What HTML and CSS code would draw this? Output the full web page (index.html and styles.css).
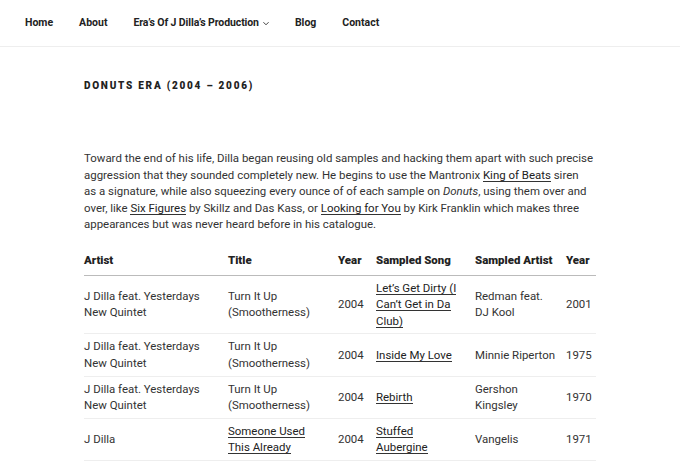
FILE: index.html
```html
<!DOCTYPE html>
<html lang="en">
<head>
  <meta charset="UTF-8" />
  <meta name="viewport" content="width=device-width, initial-scale=1.0"/>
  <title>Donuts Era (2004 – 2006)</title>
  <link rel="stylesheet" href="styles.css">
</head>
<body>
  <nav class="nav">
    <a href="#">Home</a>
    <a href="#">About</a>
    <a href="#" class="has-sub">Era’s Of J Dilla’s Production
      <svg class="chev" width="7" height="5" viewBox="0 0 7 5"><path d="M0.5 1 L3.5 4 L6.5 1" fill="none" stroke="#222" stroke-width="1"/></svg>
    </a>
    <a href="#">Blog</a>
    <a href="#">Contact</a>
  </nav>

  <main class="content">
    <h2 class="era-title">Donuts Era (2004 – 2006)</h2>

    <p>Toward the end of his life, Dilla began reusing old samples and hacking them apart with such precise aggression that they sounded completely new. He begins to use the Mantronix <a href="#">King of Beats</a> siren as&nbsp;a signature, while also squeezing every ounce of of each sample on <em>Donuts</em>, using them over and over, like <a href="#">Six Figures</a> by Skillz and Das Kass, or <a href="#">Looking for You</a> by Kirk Franklin which makes three appearances but was never heard before in his catalogue.</p>

    <table class="samples">
      <thead>
        <tr>
          <th class="c-artist">Artist</th>
          <th class="c-title">Title</th>
          <th class="c-year">Year</th>
          <th class="c-song">Sampled Song</th>
          <th class="c-sartist">Sampled Artist</th>
          <th class="c-syear">Year</th>
        </tr>
      </thead>
      <tbody>
        <tr>
          <td>J Dilla feat. Yesterdays New Quintet</td>
          <td>Turn It Up (Smootherness)</td>
          <td>2004</td>
          <td><a href="#">Let’s Get Dirty (I Can’t Get in Da Club)</a></td>
          <td>Redman feat. DJ&nbsp;Kool</td>
          <td>2001</td>
        </tr>
        <tr>
          <td>J Dilla feat. Yesterdays New Quintet</td>
          <td>Turn It Up (Smootherness)</td>
          <td>2004</td>
          <td><a href="#">Inside My Love</a></td>
          <td>Minnie Riperton</td>
          <td>1975</td>
        </tr>
        <tr>
          <td>J Dilla feat. Yesterdays New Quintet</td>
          <td>Turn It Up (Smootherness)</td>
          <td>2004</td>
          <td><a href="#">Rebirth</a></td>
          <td>Gershon Kingsley</td>
          <td>1970</td>
        </tr>
        <tr>
          <td>J Dilla</td>
          <td><a href="#">Someone Used This Already</a></td>
          <td>2004</td>
          <td><a href="#">Stuffed Aubergine</a></td>
          <td>Vangelis</td>
          <td>1971</td>
        </tr>
      </tbody>
    </table>
  </main>
</body>
</html>
```

FILE: styles.css
```css
body { margin: 0; font-family: Roboto, "Liberation Sans", sans-serif; color: #333; background: #fff; font-size: 11.45px; line-height: 16.6px; }
a { color: #222; text-decoration: none; }

.nav { display: flex; align-items: center; height: 46px; padding: 0 0 0 25px; border-bottom: 1px solid #eee; gap: 26px; }
.nav a { font-size: 10.5px; font-weight: 700; color: #222; }
.nav .has-sub { display: flex; align-items: center; gap: 4px; letter-spacing: -0.1px; }
.chev { margin-top: 1px; width: 6px; }

.content { width: 512px; margin-left: 84px; }
.era-title { font-size: 10px; font-weight: 900; letter-spacing: 1.75px; text-transform: uppercase; color: #222; margin: 32px 0 0; line-height: 14px; }
.content p { margin: 57px 0 0; }
.content p a, .samples td a { box-shadow: inset 0 -1px 0 #333; }

.samples { width: 512px; table-layout: fixed; border-collapse: collapse; margin-top: 11px; }
.samples th { text-align: left; font-weight: 900; color: #222; padding: 8px 6px 6px 0; border-bottom: 1px solid #bbb; white-space: nowrap; }
.samples td { padding: 4px 6px 4px 0; border-bottom: 1px solid #eee; vertical-align: middle; }
.samples tr > :nth-child(2) { padding-right: 14px; }
.samples tr > :nth-child(4) { padding-right: 11px; }
.samples tr > :nth-child(5) { padding-right: 5px; }
.samples tr > :last-child { padding-right: 0; }
.samples .c-artist { width: 138px; }
.samples .c-title { width: 96px; }
.samples .c-year { width: 32px; }
.samples .c-song { width: 88px; }
.samples .c-sartist { width: 86px; }
.samples .c-syear { width: 30px; }
```
